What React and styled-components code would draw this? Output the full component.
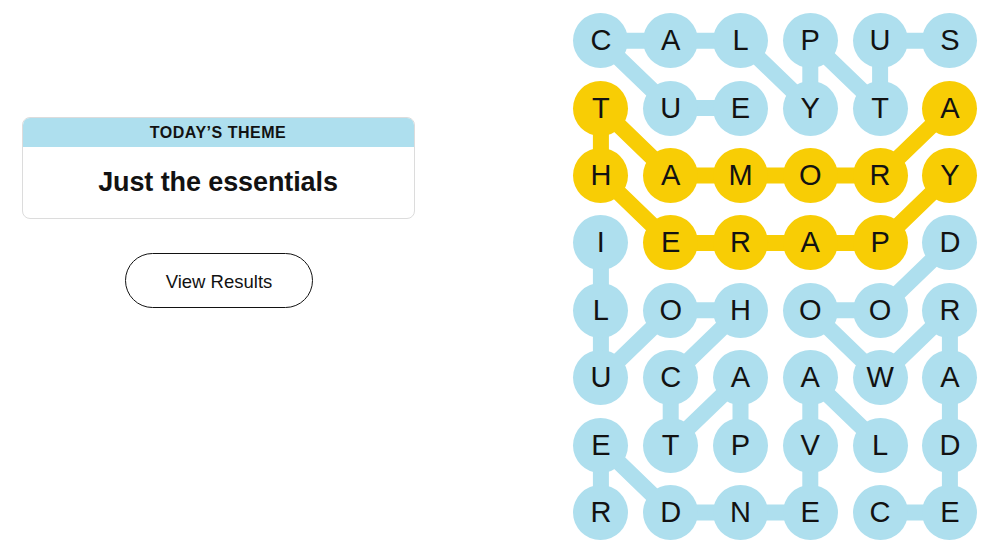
import styled, { createGlobalStyle } from 'styled-components'

const GlobalStyle = createGlobalStyle`
	html, body {
		margin: 0;
		padding: 0;
		background: #fff;
	}
	body {
		font-family: 'Liberation Sans', Arial, sans-serif;
		color: #121212;
	}
`

const BLUE = '#aedfee'
const YELLOW = '#f8cd05'
const COL_W = 69.8
const ROW_H = 67.4

const letters = ['CALPUS', 'TUEYTA', 'HAMORY', 'IERAPD', 'LOHOOR', 'UCAAWA', 'ETPVLD', 'RDNECE']

const words = [
	{ spangram: false, path: [[2, 1], [1, 1], [0, 0], [1, 0], [2, 0], [3, 1], [3, 0], [4, 1], [4, 0], [5, 0]] },
	{ spangram: true, path: [[5, 1], [4, 2], [3, 2], [2, 2], [1, 2], [0, 1], [0, 2], [1, 3], [2, 3], [3, 3], [4, 3], [5, 2]] },
	{ spangram: false, path: [[2, 6], [2, 5], [1, 6], [1, 5], [2, 4], [1, 4], [0, 5], [0, 4], [0, 3]] },
	{ spangram: false, path: [[4, 7], [5, 7], [5, 6], [5, 5], [5, 4], [4, 5], [3, 4], [4, 4], [5, 3]] },
	{ spangram: false, path: [[4, 6], [3, 5], [3, 6], [3, 7], [2, 7], [1, 7], [0, 6], [0, 7]] },
]

const spangramCells = new Set(words.find((w) => w.spangram).path.map(([c, r]) => `${c}-${r}`))

const Page = styled.div`
	display: flex;
	height: 556px;
	overflow: hidden;
`

const Side = styled.div`
	width: 436px;
	padding-top: 117px;
	display: flex;
	flex-direction: column;
	align-items: center;
	gap: 34px;
`

const ThemeCard = styled.div`
	width: 393px;
	border: 1px solid #dcdcdc;
	border-radius: 8px;
	overflow: hidden;
	box-sizing: border-box;
`

const ThemeHeader = styled.div`
	background: ${BLUE};
	height: 29px;
	display: flex;
	align-items: center;
	justify-content: center;
	font-size: 16px;
	font-weight: 700;
	letter-spacing: 0.5px;
	text-transform: uppercase;
	color: #121212;
	padding-top: 1px;
	box-sizing: border-box;
`

const ThemeBody = styled.div`
	height: 71px;
	display: flex;
	align-items: center;
	justify-content: center;
	font-size: 27px;
	font-weight: 700;
	letter-spacing: -0.1px;
	color: #121212;
	padding-bottom: 1px;
	box-sizing: border-box;
`

const ResultsButton = styled.button`
	width: 188px;
	height: 55px;
	border: 1px solid #121212;
	border-radius: 28px;
	background: #fff;
	font-family: 'Liberation Sans', Arial, sans-serif;
	font-size: 18.5px;
	color: #121212;
	cursor: pointer;
	margin-left: 2px;
	padding-top: 3px;
`

const Board = styled.div`
	position: relative;
	margin-left: 130px;
	margin-top: 7px;
	display: grid;
	grid-template-columns: repeat(6, ${COL_W}px);
	grid-template-rows: repeat(8, ${ROW_H}px);
	height: fit-content;
`

const Links = styled.svg`
	position: absolute;
	inset: 0;
	pointer-events: none;
`

const Cell = styled.div`
	position: relative;
	display: flex;
	align-items: center;
	justify-content: center;
`

const Letter = styled.button`
	width: 55px;
	height: 55px;
	border-radius: 50%;
	border: none;
	padding: 0;
	background: ${(p) => (p.$spangram ? YELLOW : BLUE)};
	font-family: 'Liberation Sans', Arial, sans-serif;
	font-size: 29px;
	color: #121212;
	display: flex;
	align-items: center;
	justify-content: center;
`

const center = ([c, r]) => `${(c + 0.5) * COL_W},${(r + 0.5) * ROW_H}`

export default function App() {
	return (
		<>
			<GlobalStyle />
			<Page>
				<Side>
					<ThemeCard>
						<ThemeHeader>Today’s Theme</ThemeHeader>
						<ThemeBody>Just the essentials</ThemeBody>
					</ThemeCard>
					<ResultsButton>View Results</ResultsButton>
				</Side>
				<Board>
					<Links width={6 * COL_W} height={8 * ROW_H}>
						{words.map((w, i) => (
							<polyline
								key={i}
								points={w.path.map(center).join(' ')}
								fill='none'
								stroke={w.spangram ? YELLOW : BLUE}
								strokeWidth='16'
								strokeLinejoin='round'
								strokeLinecap='round'
							/>
						))}
					</Links>
					{letters.map((row, r) =>
						row.split('').map((ch, c) => (
							<Cell key={`${c}-${r}`}>
								<Letter $spangram={spangramCells.has(`${c}-${r}`)}>{ch}</Letter>
							</Cell>
						))
					)}
				</Board>
			</Page>
		</>
	)
}
